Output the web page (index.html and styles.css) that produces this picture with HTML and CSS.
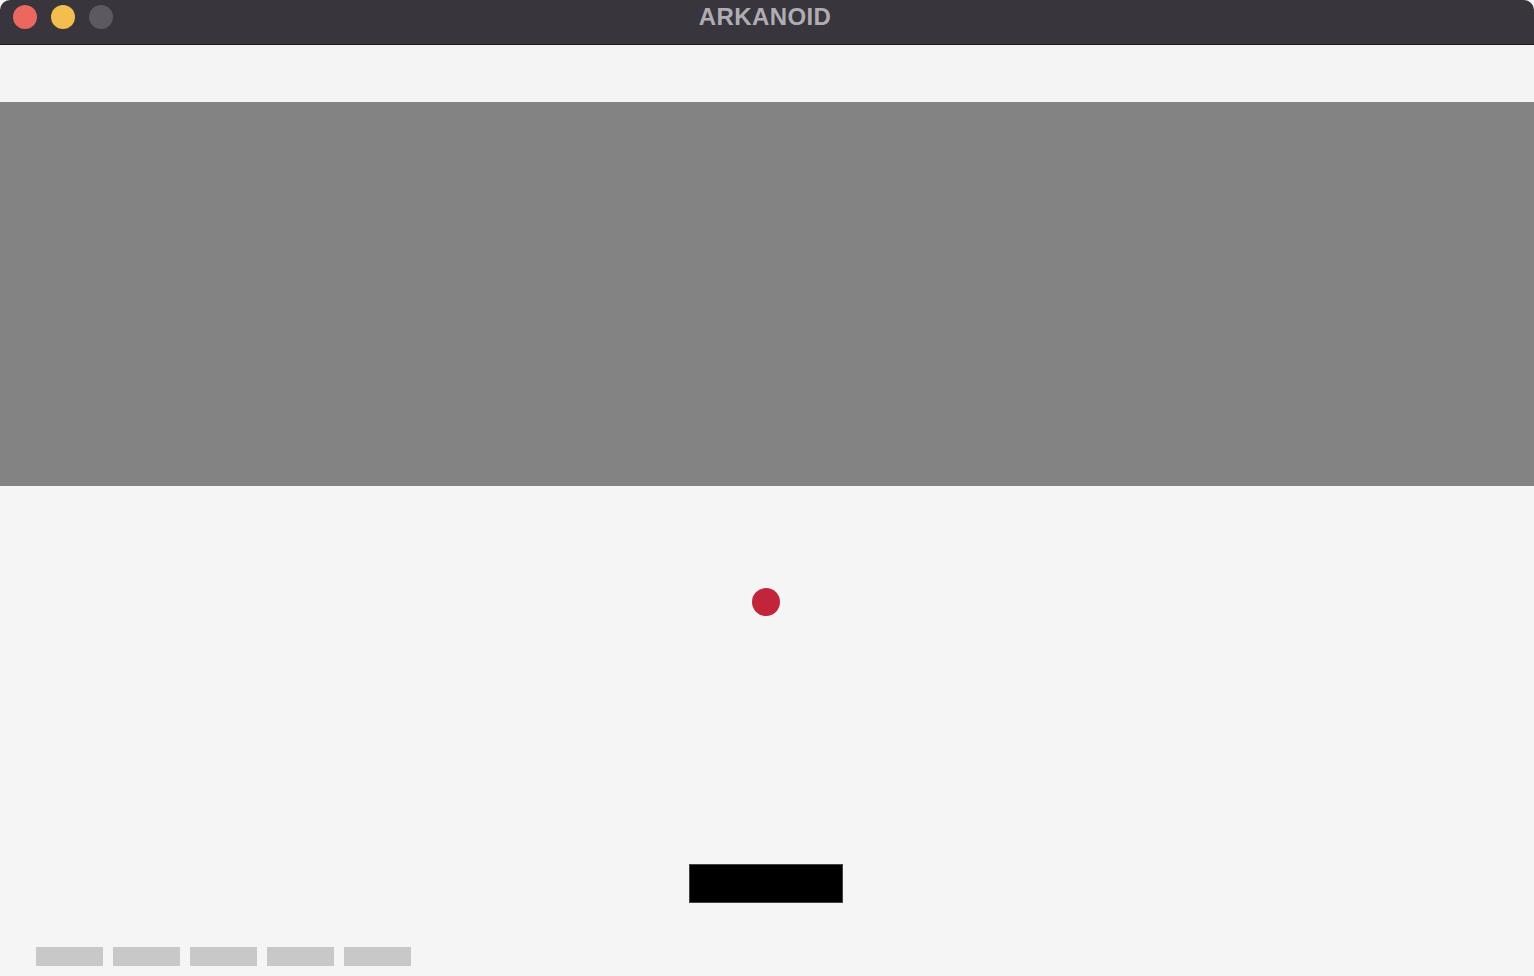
FILE: index.html
```html
<!DOCTYPE html>
<html lang="en">
<head>
<meta charset="utf-8">
<title>ARKANOID</title>
<link rel="stylesheet" href="styles.css">
</head>
<body>
<div class="window">
  <header class="titlebar">
    <div class="lights">
      <span class="light red"></span>
      <span class="light yellow"></span>
      <span class="light gray"></span>
    </div>
    <div class="title">ARKANOID</div>
    <div class="spacer"></div>
  </header>
  <div class="top-gap"></div>
  <div class="bricks"></div>
  <main class="field">
    <div class="ball"></div>
    <div class="paddle"></div>
    <div class="lives">
      <span class="life"></span>
      <span class="life"></span>
      <span class="life"></span>
      <span class="life"></span>
      <span class="life"></span>
    </div>
  </main>
</div>
</body>
</html>
```

FILE: styles.css
```css
html, body {
  margin: 0;
  padding: 0;
  height: 100%;
  background: #f5f5f5;
  overflow: hidden;
}

.window {
  display: flex;
  flex-direction: column;
  height: 976px;
  width: 1534px;
  background: #f5f5f5;
}

.titlebar {
  flex: 0 0 44px;
  display: grid;
  grid-template-columns: 1fr auto 1fr;
  align-items: start;
  background: #38353c;
  border-bottom: 1px solid #1c1b1f;
  border-radius: 10px 10px 0 0;
}

.lights {
  display: flex;
  align-items: center;
  gap: 14px;
  height: 34px;
  padding-left: 13px;
}

.light {
  width: 24px;
  height: 24px;
  border-radius: 50%;
  display: block;
}

.light.red { background: #ec675d; }
.light.yellow { background: #f4be4f; }
.light.gray { background: #5c5961; }

.title {
  font-family: "Liberation Sans", Arial, sans-serif;
  font-weight: bold;
  font-size: 24px;
  line-height: 34px;
  letter-spacing: 0.4px;
  color: #afacb4;
  margin-left: -4px;
}

.top-gap {
  flex: 0 0 57px;
  background: #f4f4f4;
}

.bricks {
  flex: 0 0 384px;
  background: #838383;
}

.field {
  position: relative;
  flex: 1 1 auto;
  display: flex;
  align-items: flex-end;
  padding: 0 0 10px 36px;
}

.ball {
  position: absolute;
  left: 752px;
  top: 102px;
  width: 28px;
  height: 28px;
  border-radius: 50%;
  background: #c2243b;
}

.paddle {
  position: absolute;
  left: 689px;
  top: 378px;
  width: 152px;
  height: 37px;
  background: #000;
  border: 1px solid #444;
}

.lives {
  display: flex;
  gap: 10px;
}

.life {
  display: block;
  width: 67px;
  height: 19px;
  background: #c8c8c8;
}
```
